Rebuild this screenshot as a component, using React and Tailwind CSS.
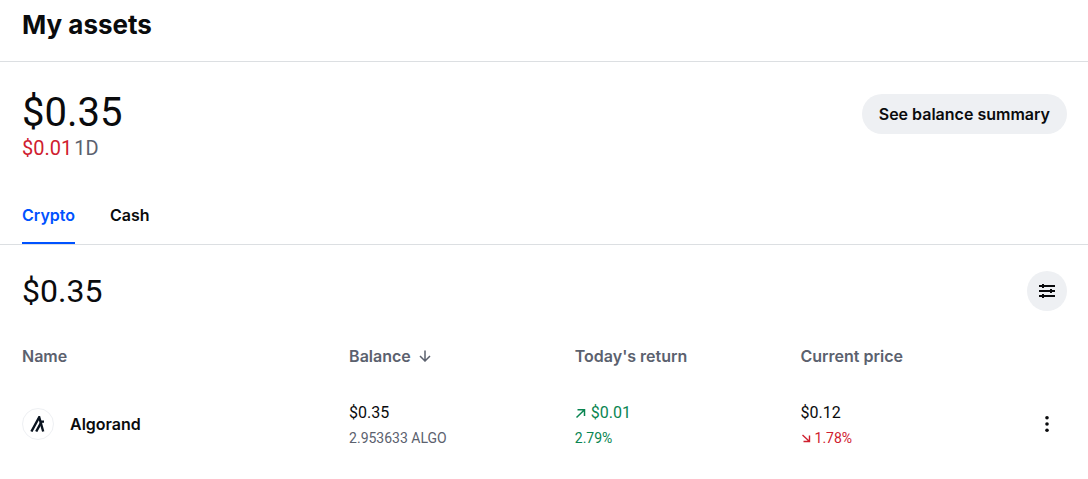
import React, { useState } from 'react';

const holdings = [
  {
    name: 'Algorand',
    balance: '$0.35',
    amount: '2.953633 ALGO',
    todayReturn: '$0.01',
    returnPercent: '2.79%',
    price: '$0.12',
    priceChange: '1.78%'
  }
];

const tabs = ['Crypto', 'Cash'];

const ArrowUpRight = () => (
  <svg className="h-3 w-3" viewBox="0 0 12 12" fill="none" stroke="currentColor" strokeWidth="1.5" aria-hidden="true">
    <path d="M2.5 2.7H9.5V9M9.5 2.7L1.5 10.5" />
  </svg>
);

const ArrowDownRight = () => (
  <svg className="h-3 w-3" viewBox="0 0 12 12" fill="none" stroke="currentColor" strokeWidth="1.4" aria-hidden="true">
    <path d="M8.5 3.5V9.5H2.5M8.5 9.5L1.5 3" />
  </svg>
);

const ArrowDown = () => (
  <svg className="h-3 w-3" viewBox="0 0 12 12" fill="none" stroke="currentColor" strokeWidth="1.5" aria-hidden="true">
    <path d="M6 0.5V11M1 6l5 5 5-5" />
  </svg>
);

const FilterIcon = () => (
  <svg className="h-4 w-4" viewBox="0 0 16 16" fill="currentColor" aria-hidden="true">
    <path d="M0 2h16v2H0zM0 7h16v2H0zM0 12h16v2H0z" />
    <path d="M3 1h2v4H3zM11 6h2v4h-2zM3 11h2v4H3z" />
  </svg>
);

const MoreIcon = () => (
  <svg className="h-4 w-4" viewBox="0 0 16 16" fill="currentColor" aria-hidden="true">
    <circle cx="8" cy="1.8" r="1.8" />
    <circle cx="8" cy="8" r="1.8" />
    <circle cx="8" cy="14.2" r="1.8" />
  </svg>
);

const AlgorandLogo = () => (
  <span className="flex h-8 w-8 items-center justify-center rounded-full border border-[#eef0f3]">
    <svg className="h-4 w-4" viewBox="0 0 16 16" fill="none" stroke="#0a1420" strokeWidth="2.4" aria-hidden="true">
      <path d="M1.4 15.5L9.2 1.2L13.2 15.5" />
      <path d="M6.2 15.5L11.6 5.6L14 5.6" />
    </svg>
  </span>
);

const App = () => {
  const [activeTab, setActiveTab] = useState('Crypto');

  return (
    <div className="bg-white font-['Inter',sans-serif] text-base text-[#0a0b0d]">
      <header className="border-b border-[#dcdfe2] px-[22px] pt-2 pb-5">
        <h1 className="text-[26px] leading-[33px] font-bold">My assets</h1>
      </header>

      {/* Total balance */}
      <section className="flex items-start justify-between pt-8 pr-[21px] pl-[22px]">
        <div className="font-['Roboto',sans-serif]">
          <p className="text-[40px] leading-[38px]">$0.35</p>
          <p className="mt-1.5 flex gap-0.5 text-xl leading-5">
            <span className="text-[#cf202f]">$0.01</span>
            <span className="text-[#5b616e]">1D</span>
          </p>
        </div>
        <button className="h-10 rounded-full bg-[#eef0f3] px-[17px] font-semibold">
          See balance summary
        </button>
      </section>

      {/* Tabs */}
      <nav className="mt-[45px] flex gap-[35px] border-b border-[#dcdfe2] px-[22px]" role="tablist">
        {tabs.map(tab => (
          <button
            key={tab}
            role="tab"
            aria-selected={activeTab === tab}
            onClick={() => setActiveTab(tab)}
            className={`border-b-2 pb-[15px] leading-6 font-semibold ${
              activeTab === tab ? 'border-[#0052ff] text-[#0052ff]' : 'border-transparent'
            }`}
          >
            {tab}
          </button>
        ))}
      </nav>

      <section className="pt-[26px] pr-[21px] pl-[22px]">
        <div className="flex items-center justify-between">
          <h2 className="font-['Roboto',sans-serif] text-[32px] leading-[40px]">$0.35</h2>
          <button
            aria-label="Filter assets"
            className="flex h-10 w-10 items-center justify-center rounded-full bg-[#eef0f3]"
          >
            <FilterIcon />
          </button>
        </div>

        {/* Holdings */}
        <table className="mt-[21px] w-full table-fixed text-left">
          <thead className="text-[#5b616e]">
            <tr className="h-12">
              <th className="w-[31.3%] font-semibold">Name</th>
              <th className="w-[21.6%] font-semibold">
                <span className="flex items-center gap-2">
                  Balance
                  <ArrowDown />
                </span>
              </th>
              <th className="w-[21.6%] font-semibold">Today's return</th>
              <th className="font-semibold">Current price</th>
              <th className="w-10" aria-label="Actions" />
            </tr>
          </thead>
          <tbody>
            {holdings.map(asset => (
              <tr key={asset.name} className="h-[88px]">
                <td>
                  <div className="flex items-center gap-4 font-semibold">
                    <AlgorandLogo />
                    {asset.name}
                  </div>
                </td>
                <td className="pt-0.5 font-['Roboto',sans-serif]">
                  <p className="leading-[26px]">{asset.balance}</p>
                  <p className="text-sm leading-6 text-[#5b616e]">{asset.amount}</p>
                </td>
                <td className="pt-0.5 font-['Roboto',sans-serif] text-[#098551]">
                  <p className="flex items-center gap-1 leading-[26px]">
                    <ArrowUpRight />
                    {asset.todayReturn}
                  </p>
                  <p className="text-sm leading-6">{asset.returnPercent}</p>
                </td>
                <td className="pt-0.5 font-['Roboto',sans-serif]">
                  <p className="leading-[26px]">{asset.price}</p>
                  <p className="flex items-center gap-0.5 text-sm leading-6 text-[#cf202f]">
                    <ArrowDownRight />
                    {asset.priceChange}
                  </p>
                </td>
                <td>
                  <button
                    aria-label={`More options for ${asset.name}`}
                    className="flex h-10 w-10 items-center justify-center"
                  >
                    <MoreIcon />
                  </button>
                </td>
              </tr>
            ))}
          </tbody>
        </table>
      </section>
    </div>
  );
};

export default App;
